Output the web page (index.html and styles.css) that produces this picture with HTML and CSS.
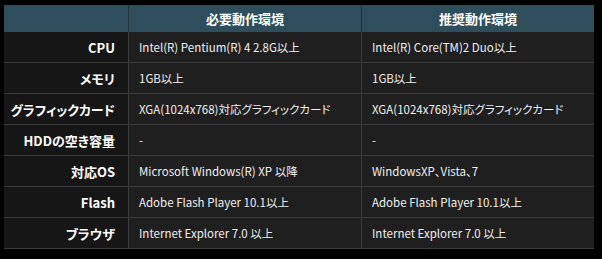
FILE: index.html
```html
<!DOCTYPE html>
<html lang="ja">
<head>
<meta charset="utf-8">
<title>動作環境</title>
<link rel="stylesheet" href="styles.css">
</head>
<body>
<div class="spec">
  <div class="hcell blank"></div>
  <div class="hcell mid">必要動作環境</div>
  <div class="hcell">推奨動作環境</div>

  <div class="label">CPU</div>
  <div class="val mid">Intel(R) Pentium(R) 4 2.8G以上</div>
  <div class="val">Intel(R) Core(TM)2 Duo以上</div>

  <div class="label">メモリ</div>
  <div class="val mid">1GB以上</div>
  <div class="val">1GB以上</div>

  <div class="label">グラフィックカード</div>
  <div class="val mid">XGA(1024x768)対応グラフィックカード</div>
  <div class="val">XGA(1024x768)対応グラフィックカード</div>

  <div class="label">HDDの空き容量</div>
  <div class="val mid">-</div>
  <div class="val">-</div>

  <div class="label">対応OS</div>
  <div class="val mid">Microsoft Windows(R) XP 以降</div>
  <div class="val">WindowsXP、Vista、7</div>

  <div class="label">Flash</div>
  <div class="val mid">Adobe Flash Player 10.1以上</div>
  <div class="val">Adobe Flash Player 10.1以上</div>

  <div class="label">ブラウザ</div>
  <div class="val mid">Internet Explorer 7.0 以上</div>
  <div class="val">Internet Explorer 7.0 以上</div>
</div>
</body>
</html>
```
FILE: styles.css
```css
html, body {
  margin: 0;
  background: #000;
}
body {
  padding: 5px 4px;
  font-family: "Noto Sans CJK JP", "Liberation Sans", sans-serif;
  color: #fff;
}
.spec {
  display: grid;
  grid-template-columns: 125px 233px 232px;
  width: 590px;
  white-space: nowrap;
  font-feature-settings: "palt" 1;
}
.hcell {
  height: 27px;
  background: #2e4e5c;
  color: #fff;
  font-weight: bold;
  font-size: 13px;
  display: flex;
  align-items: center;
  justify-content: center;
}
.hcell.blank,
.hcell.mid {
  border-right: 1px solid #22343d;
}
.label,
.val {
  height: 30px;
  border-bottom: 1px solid #3b3b3b;
  display: flex;
  align-items: center;
  font-size: 11.5px;
}
.label {
  background: #161616;
  border-right: 1px solid #3b3b3b;
  justify-content: flex-end;
  padding-right: 13px;
  font-weight: bold;
  font-size: 13px;
}
.val {
  background: #1f1f1f;
  padding-left: 10px;
  color: #f0f0f0;
}
.val.mid {
  border-right: 1px solid #3b3b3b;
}
```
